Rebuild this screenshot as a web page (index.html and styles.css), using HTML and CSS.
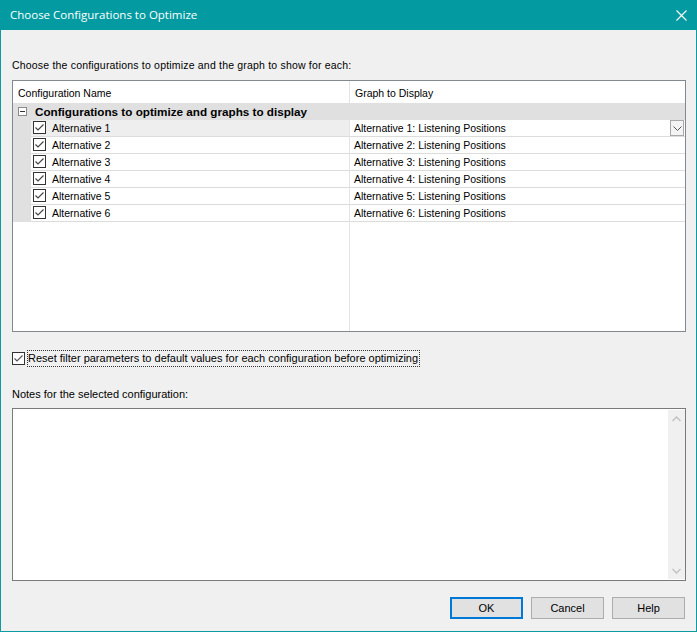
FILE: index.html
```html
<!DOCTYPE html>
<html>
<head>
<meta charset="utf-8">
<link rel="stylesheet" href="styles.css">
</head>
<body>
<div class="window">
  <div class="titlebar">
    <span class="title">Choose Configurations to Optimize</span>
    <svg class="close" width="11" height="11" viewBox="0 0 11 11"><path d="M0.5 0.5L10.5 10.5M10.5 0.5L0.5 10.5" stroke="#fff" stroke-width="1.1" fill="none"/></svg>
  </div>
  <div class="content">
    <div class="label top-label">Choose the configurations to optimize and the graph to show for each:</div>
    <div class="grid">
      <div class="grid-header">
        <div class="h1">Configuration Name</div>
        <div class="h2">Graph to Display</div>
      </div>
      <div class="group-row">
        <span class="minus"><svg width="9" height="9" viewBox="0 0 9 9"><rect x="0.5" y="0.5" width="8" height="8" fill="#fff" stroke="#8a8a8a"/><path d="M2 4.5H7" stroke="#333"/></svg></span>
        <span class="group-text">Configurations to optimize and graphs to display</span>
      </div>
      <div class="rows">
        <div class="row selected">
          <div class="indent"></div>
          <div class="c1"><svg class="cb" width="13" height="13" viewBox="0 0 13 13"><rect x="0.5" y="0.5" width="12" height="12" fill="#fff" stroke="#333"/><path d="M2.5 6.5L5 9L10.5 3.5" stroke="#444" stroke-width="1.2" fill="none"/></svg><span>Alternative 1</span></div>
          <div class="c2"><span>Alternative 1: Listening Positions</span><span class="dd"><svg width="9" height="5" viewBox="0 0 9 5"><path d="M0.5 0.5L4.5 4.5L8.5 0.5" stroke="#555" fill="none"/></svg></span></div>
        </div>
        <div class="row">
          <div class="indent"></div>
          <div class="c1"><svg class="cb" width="13" height="13" viewBox="0 0 13 13"><rect x="0.5" y="0.5" width="12" height="12" fill="#fff" stroke="#333"/><path d="M2.5 6.5L5 9L10.5 3.5" stroke="#444" stroke-width="1.2" fill="none"/></svg><span>Alternative 2</span></div>
          <div class="c2"><span>Alternative 2: Listening Positions</span></div>
        </div>
        <div class="row">
          <div class="indent"></div>
          <div class="c1"><svg class="cb" width="13" height="13" viewBox="0 0 13 13"><rect x="0.5" y="0.5" width="12" height="12" fill="#fff" stroke="#333"/><path d="M2.5 6.5L5 9L10.5 3.5" stroke="#444" stroke-width="1.2" fill="none"/></svg><span>Alternative 3</span></div>
          <div class="c2"><span>Alternative 3: Listening Positions</span></div>
        </div>
        <div class="row">
          <div class="indent"></div>
          <div class="c1"><svg class="cb" width="13" height="13" viewBox="0 0 13 13"><rect x="0.5" y="0.5" width="12" height="12" fill="#fff" stroke="#333"/><path d="M2.5 6.5L5 9L10.5 3.5" stroke="#444" stroke-width="1.2" fill="none"/></svg><span>Alternative 4</span></div>
          <div class="c2"><span>Alternative 4: Listening Positions</span></div>
        </div>
        <div class="row">
          <div class="indent"></div>
          <div class="c1"><svg class="cb" width="13" height="13" viewBox="0 0 13 13"><rect x="0.5" y="0.5" width="12" height="12" fill="#fff" stroke="#333"/><path d="M2.5 6.5L5 9L10.5 3.5" stroke="#444" stroke-width="1.2" fill="none"/></svg><span>Alternative 5</span></div>
          <div class="c2"><span>Alternative 5: Listening Positions</span></div>
        </div>
        <div class="row">
          <div class="indent"></div>
          <div class="c1"><svg class="cb" width="13" height="13" viewBox="0 0 13 13"><rect x="0.5" y="0.5" width="12" height="12" fill="#fff" stroke="#333"/><path d="M2.5 6.5L5 9L10.5 3.5" stroke="#444" stroke-width="1.2" fill="none"/></svg><span>Alternative 6</span></div>
          <div class="c2"><span>Alternative 6: Listening Positions</span></div>
        </div>
      </div>
      <div class="filler">
        <div class="f1"></div>
        <div class="f2"></div>
      </div>
    </div>
    <div class="reset">
      <svg class="cb" width="13" height="13" viewBox="0 0 13 13"><rect x="0.5" y="0.5" width="12" height="12" fill="#fff" stroke="#333"/><path d="M2.5 6.5L5 9L10.5 3.5" stroke="#555" stroke-width="1.2" fill="none"/></svg>
      <span class="focus">Reset filter parameters to default values for each configuration before optimizing</span>
    </div>
    <div class="label notes-label">Notes for the selected configuration:</div>
    <div class="notes">
      <div class="notes-area"></div>
      <div class="scrollbar">
        <svg width="9" height="6" viewBox="0 0 9 6"><path d="M0.5 5L4.5 1L8.5 5" stroke="#c2c2c2" stroke-width="1.5" fill="none"/></svg>
        <svg width="9" height="6" viewBox="0 0 9 6"><path d="M0.5 1L4.5 5L8.5 1" stroke="#c2c2c2" stroke-width="1.5" fill="none"/></svg>
      </div>
    </div>
    <div class="buttons">
      <div class="btn default">OK</div>
      <div class="btn">Cancel</div>
      <div class="btn">Help</div>
    </div>
  </div>
</div>
</body>
</html>
```

FILE: styles.css
```css
* { box-sizing: border-box; }
html, body { margin: 0; padding: 0; }
body {
  font-family: "Liberation Sans", Arial, sans-serif;
  font-size: 10.5px;
  color: #000;
  background: #f0f0f0;
}
.window {
  width: 697px;
  height: 632px;
  border: 1px solid #0a9ca2;
  border-top: none;
  background: #f0f0f0;
  display: flex;
  flex-direction: column;
}
.titlebar {
  height: 30px;
  flex: none;
  background: #039ba1;
  margin: 0 -1px;
  display: flex;
  align-items: center;
  justify-content: space-between;
  padding: 0 10px 0 10px;
  color: #fff;
  font-family: "Open Sans", "Noto Sans", sans-serif;
  font-size: 11.5px;
}
.title { line-height: 16px; }
.content {
  flex: 1;
  display: flex;
  flex-direction: column;
  padding: 0 10px 0 11px;
}
.label { height: 13px; line-height: 13px; white-space: nowrap; }
.top-label { margin-top: 29px; letter-spacing: 0.19px; }
.grid {
  margin-top: 8px;
  height: 252px;
  border: 1px solid #828790;
  background: #fff;
  display: flex;
  flex-direction: column;
}
.grid-header {
  height: 22px;
  display: flex;
  flex: none;
}
.h1 {
  width: 337px;
  border-right: 1px solid #e3e3e3;
  padding: 6px 0 0 5px;
  line-height: 13px;
}
.h2 {
  flex: 1;
  padding: 6px 0 0 5px;
  line-height: 13px;
}
.group-row {
  height: 17px;
  flex: none;
  background: #e0e0e0;
  display: flex;
  align-items: center;
}
.minus { width: 9px; height: 9px; margin-left: 5px; display: flex; }
.group-text {
  font-weight: bold;
  font-size: 11.7px;
  margin-left: 8px;
  line-height: 14px;
}
.rows { flex: none; }
.row {
  height: 17px;
  display: flex;
}
.indent { width: 18px; background: #e0e0e0; flex: none; }
.c1 {
  width: 319px;
  flex: none;
  display: flex;
  align-items: flex-start;
  border-bottom: 1px solid #dcdcdc;
  border-right: 1px solid #e3e3e3;
}
.c1 .cb { margin: 1px 0 0 2px; flex: none; }
.c1 span { margin-left: 6px; line-height: 16px; }
.row.selected .c1 { background: #eeeeee; }
.c2 {
  flex: 1;
  display: flex;
  align-items: flex-start;
  justify-content: space-between;
  border-bottom: 1px solid #dcdcdc;
  padding-left: 4px;
}
.c2 span { line-height: 16px; }
.dd {
  width: 14px;
  height: 16px;
  margin-right: 1px;
  border: 1px solid #a8a8a8;
  background: #f4f4f4;
  display: flex;
  align-items: center;
  justify-content: center;
}
.filler { flex: 1; display: flex; }
.f1 { width: 337px; border-right: 1px solid #e3e3e3; }
.f2 { flex: 1; }
.reset {
  margin-top: 18px;
  height: 17px;
  display: flex;
  align-items: center;
}
.reset .cb { flex: none; }
.focus {
  margin-left: 2px;
  border: 1px dotted #333;
  padding: 0 1px 0 0;
  line-height: 15px;
  white-space: nowrap;
  font-size: 11px;
}
.notes-label { margin-top: 21px; font-size: 11px; }
.notes {
  margin-top: 7px;
  height: 173px;
  border: 1px solid #7a7a7a;
  background: #fff;
  display: flex;
}
.notes-area { flex: 1; }
.scrollbar {
  width: 17px;
  margin: 1px 0 1px 0;
  background: #f0f0f0;
  display: flex;
  flex-direction: column;
  justify-content: space-between;
  align-items: center;
  padding: 6px 0 5px 0;
}
.buttons {
  margin-top: 16px;
  display: flex;
  justify-content: flex-end;
  gap: 8px;
  padding-right: 1px;
}
.btn {
  width: 73px;
  height: 22px;
  border: 1px solid #adadad;
  background: #e1e1e1;
  display: flex;
  align-items: center;
  justify-content: center;
  font-size: 11px;
}
.btn.default { border: 2px solid #0078d7; }
```
